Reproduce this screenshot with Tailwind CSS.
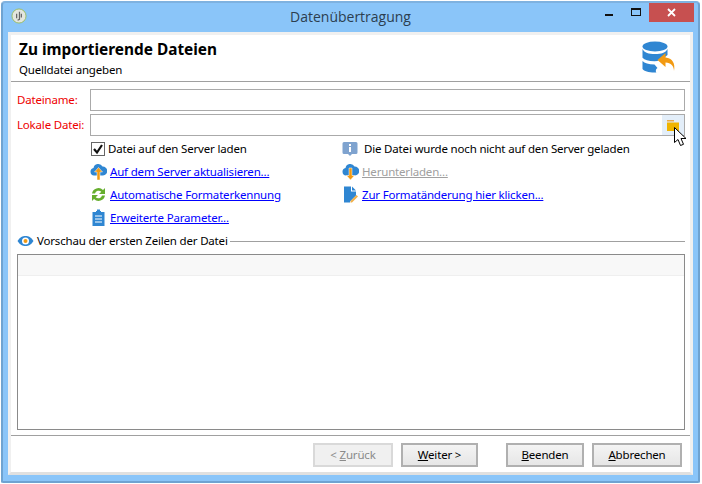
<!DOCTYPE html>
<html lang="de"><head><meta charset="utf-8"><script src="https://cdn.jsdelivr.net/npm/@tailwindcss/browser@4"></script></head>
<body class="w-[702px] h-[484px] bg-white overflow-hidden font-['Noto_Sans',sans-serif] text-[11.5px] tracking-[-0.18px] text-black">
<div class="ml-px mt-px w-[699px] h-[482px] flex flex-col bg-[#8ac5f9] border-2 border-[#6fa3d1] rounded-t-[4px] rounded-b-[2px] border-t-[#7fb2e0]">
  <div class="h-[29px] shrink-0 flex relative pl-[8px] pr-[4px] items-start">
    <svg class="w-[16px] h-[16px] mt-[5px]" viewBox="0 0 17 17"><circle cx="8.500" cy="8.500" r="7.500" fill="#e4e6df" stroke="#9bbd62"/><path d="M6 6v5M9 4v8l-2 1M11 6v4" stroke="#666" stroke-width="1.300" fill="none"/></svg>
    <div class="absolute left-0 right-0 top-[4px] text-center font-['Open_Sans',sans-serif] text-[14px] tracking-normal leading-[20px] text-[#2c3e50]">Datenübertragung</div>
    <div class="ml-auto flex">
      <div class="w-[8px] h-[2px] mt-[11px] mr-[18px] bg-[#111]"></div>
      <div class="w-[10px] h-[8px] mt-[5px] mr-[8px] border border-t-2 border-[#111]"></div>
      <div class="w-[45px] h-[19px] bg-[#c75050] flex items-center justify-center">
        <svg class="w-[9px] h-[9px]" viewBox="0 0 9 9"><path d="M1 1l7 7M8 1l-7 7" stroke="#fff" stroke-width="1.800"/></svg>
      </div>
    </div>
  </div>
  <div class="mx-[5px] flex-1 bg-white border-[3px] border-[#f0f0f0] flex flex-col min-h-0 mb-[6px] border-b-[#e0e0e0]">
    <div class="h-[47px] shrink-0 border-b border-[#a0a0a0] flex pl-[8px] pr-[14px] relative">
      <div>
        <div class="font-bold text-[15.4px] tracking-normal leading-[18px] mt-[6px]">Zu importierende Dateien</div>
        <div class="leading-[14px] mt-[4px]">Quelldatei angeben</div>
      </div>
      <svg class="ml-auto mt-[6px] w-[34px] h-[33px]" viewBox="0 0 34 33">
        <ellipse cx="13" cy="5.500" rx="12.500" ry="5" fill="#2f86d2"/>
        <path d="M.5 8c2 4 6 5 12.500 5s10.500-1 12.500-5v6c-1 1-3 2.500-6 3l-4 3-3 .2c-6 0-10-1.200-12-3.500z" fill="#2f86d2"/>
        <path d="M.5 20c2 2.300 6 3.500 12 3.500l3 3.500c-2 1-2 4-1 4.500h-2c-6 0-10.500-1.500-12-3.500z" fill="#2f86d2"/>
        <path d="M32 31c0-5-3-8-8.500-8.500v4.500l-8-7 8-7v4.500c7 .5 10 6 8.500 13.500z" fill="#f29a12" transform="translate(0 -1)"/>
      </svg>
    </div>
    <div class="flex flex-col pl-[6px] pr-[5px] shrink-0">
      <div class="flex h-[22px] mt-[7px] items-center shrink-0">
        <div class="w-[73px] text-[#ee0000]">Dateiname:</div>
        <div class="flex-1 h-full border border-[#aaaaaa]"></div>
      </div>
      <div class="flex h-[22px] mt-[3px] items-center shrink-0">
        <div class="w-[73px] text-[#ee0000]">Lokale Datei:</div>
        <div class="flex-1 h-full border border-[#aaaaaa] flex justify-end">
          <div class="w-[22px] bg-[#e3eef9] flex items-center justify-center">
            <svg class="w-[12px] h-[11px]" viewBox="0 0 12 11"><path d="M0 0h7v1.500H0z" fill="#e8a948"/><path d="M0 2.500h12V11H0z" fill="#f0b400"/></svg>
          </div>
        </div>
      </div>
      <div class="grid grid-cols-[252px_1fr] pl-[73px] mt-[1px]">
        <div class="flex items-center h-[23px] pl-px">
          <span class="w-[14px] h-[14px] border border-[#666] flex items-center justify-center mr-[3px] bg-white"><svg class="w-[12px] h-[12px]" viewBox="0 0 12 12"><path d="M2 6l3 3.500 5-7.500" fill="none" stroke="#111" stroke-width="2.200"/></svg></span>
          <span>Datei auf den Server laden</span>
        </div>
        <div class="flex items-center h-[23px]">
          <svg class="w-[16px] h-[16px] mr-[6px]" viewBox="0 0 16 16"><path d="M2 1h12a1.500 1.500 0 0 1 1.500 1.500v9A1.500 1.500 0 0 1 14 13h-4l-2 2-2-2H2a1.500 1.500 0 0 1-1.500-1.500v-9A1.500 1.500 0 0 1 2 1z" fill="#7fa3cf"/><path d="M7 3h2v2H7zM7 6h2v5H7z" fill="#fff"/></svg>
          <span>Die Datei wurde noch nicht auf den Server geladen</span>
        </div>
        <div class="flex items-center h-[23px]">
          <svg class="w-[17px] h-[17px] mr-[3px]" viewBox="0 0 17 17"><path d="M4 12.500a3.800 3.800 0 0 1-.5-7.500A4.800 4.800 0 0 1 12.500 3.500a4.500 4.500 0 0 1 .5 9z" fill="#2f86d2"/><path d="M8.500 4.500l4 4.500H10v8H7V9H4.500z" fill="#f29a12" stroke="#fff" stroke-width=".5"/></svg>
          <a class="underline text-[#0000ff]">Auf dem Server aktualisieren...</a>
        </div>
        <div class="flex items-center h-[23px]">
          <svg class="w-[17px] h-[17px] mr-[3px]" viewBox="0 0 17 17"><path d="M4 12.500a3.800 3.800 0 0 1-.5-7.500A4.800 4.800 0 0 1 12.500 3.500a4.500 4.500 0 0 1 .5 9z" fill="#2f86d2"/><path d="M7 5h3v7.500h2.500l-4 4.500-4-4.500H7z" fill="#f29a12" stroke="#fff" stroke-width=".5"/></svg>
          <a class="underline text-[#a0a0a0]">Herunterladen...</a>
        </div>
        <div class="flex items-center h-[23px]">
          <svg class="w-[17px] h-[17px] mr-[3px]" viewBox="0 0 17 17"><path d="M2 7.500a6.500 6.500 0 0 1 11-3.500l2-2v6H9l2.300-2.300a3.800 3.800 0 0 0-6.300 1.800z" fill="#66ae2e"/><path d="M15 9.500a6.500 6.500 0 0 1-11 3.500l-2 2V9h6l-2.300 2.300a3.800 3.800 0 0 0 6.300-1.800z" fill="#66ae2e"/></svg>
          <a class="underline text-[#0000ff]">Automatische Formaterkennung</a>
        </div>
        <div class="flex items-center h-[23px]">
          <svg class="w-[17px] h-[17px] mr-[3px]" viewBox="0 0 17 17"><path d="M2 .5h7v5h5v4l-6 6v1H2z" fill="#2f86d2"/><path d="M10 .5l4 4h-4z" fill="#2f86d2"/><path d="M14.500 9l1.500 1.500L10 16.500H8.500V15z" fill="#f0b04a"/></svg>
          <a class="underline text-[#0000ff]">Zur Formatänderung hier klicken...</a>
        </div>
        <div class="flex items-center h-[23px] col-span-2">
          <svg class="w-[17px] h-[17px] mr-[3px]" viewBox="0 0 17 17"><path d="M2.500 3h3.500V2h1V.5h3V2h1v1h3.500v14H2.500z" fill="#2f86d2"/><path d="M5 7h7M5 10h7M5 13h7" stroke="#fff"/></svg>
          <a class="underline text-[#0000ff]">Erweiterte Parameter...</a>
        </div>
      </div>
      <div class="flex items-center h-[16px] mt-[4px]">
        <svg class="w-[17px] h-[12px] mr-[3px] shrink-0" viewBox="0 0 17 12"><path d="M.5 6C3 2 5.500 1 8.500 1s5.500 1 8 5c-2.500 4-5 5-8 5s-5.500-1-8-5z" fill="#2f86d2"/><circle cx="8.500" cy="6" r="3.500" fill="#fff"/><circle cx="8.500" cy="6" r="2" fill="#f29a12"/></svg>
        <span class="whitespace-nowrap">Vorschau der ersten Zeilen der Datei</span>
        <span class="flex-1 h-px bg-[#a0a0a0] ml-[2px]"></span>
      </div>
      <div class="h-[176px] mt-[5px] border border-[#8a8a8a] shrink-0">
        <div class="h-[21px] bg-[#f8f8f8] border-b border-[#efefef]"></div>
      </div>
    </div>
    <div class="mt-[5px] border-t border-[#a0a0a0] flex-1 flex pt-[7px] pr-[8px] justify-end">
      <button class="h-[24px] w-[80px] border-2 border-[#d9d9d9] bg-[#f0f0f0] text-[#8a8a8a] mr-[8px]">&lt; <u>Z</u>urück</button>
      <button class="h-[24px] w-[77px] border-2 border-[#b0b0b0] bg-[linear-gradient(#f4f4f4,#e6e6e6)] mr-[28px]"><u>W</u>eiter &gt;</button>
      <button class="h-[24px] w-[78px] border-2 border-[#b0b0b0] bg-[linear-gradient(#f4f4f4,#e6e6e6)] mr-[8px]"><u>B</u>eenden</button>
      <button class="h-[24px] w-[90px] border-2 border-[#b0b0b0] bg-[linear-gradient(#f4f4f4,#e6e6e6)]"><u>A</u>bbrechen</button>
    </div>
  </div>
</div>
<svg class="absolute left-[674px] top-[127px] w-[13px] h-[21px]" viewBox="0 0 13 21"><path d="M.5.5v15l3.500-3 2.500 6 3-1.200-2.500-5.800h5z" fill="#fff" stroke="#000"/></svg>
</body></html>
